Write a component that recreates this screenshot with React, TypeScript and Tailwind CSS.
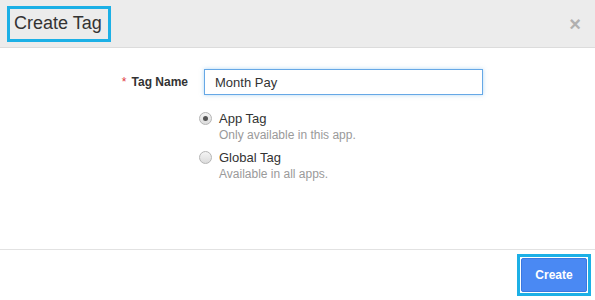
import React, { useState } from "react";

export default function App() {
  const [tagName, setTagName] = useState("Month Pay");
  const [scope, setScope] = useState<"app" | "global">("app");

  return (
    <div
      className="w-[595px] h-[300px] bg-white flex flex-col text-[#333]"
      style={{ fontFamily: '"Liberation Sans", Arial, sans-serif' }}
    >
      {/* Header */}
      <div className="h-[48px] bg-[#ececec] border-b border-[#dcdcdc] flex items-center justify-between pl-[7px] pr-[14px]">
        <div className="border-[3px] border-[#1cb0e6] pl-[4px] pr-[6px] h-[36px] flex items-center">
          <span className="text-[18px] text-[#333]">Create Tag</span>
        </div>
        <button type="button" className="text-[#b0b0b0] text-[20px] font-bold leading-none">
          ×
        </button>
      </div>

      {/* Body */}
      <div className="flex-1 pt-[21px]">
        <div className="flex items-center">
          <label className="w-[188px] text-right text-[12px] font-bold text-[#333]">
            <span className="text-[#e0383e] font-normal mr-[5px]">*</span>
            Tag Name
          </label>
          <input
            value={tagName}
            onChange={(e) => setTagName(e.target.value)}
            className="ml-[16px] w-[279px] h-[26px] border border-[#66a8e6] px-[10px] text-[13px] text-[#333] outline-none shadow-[0_0_4px_rgba(102,175,233,0.5)]"
          />
        </div>

        <div className="ml-[199px] mt-[16px] flex flex-col gap-[7px]">
          <RadioOption
            checked={scope === "app"}
            onSelect={() => setScope("app")}
            title="App Tag"
            desc="Only available in this app."
          />
          <RadioOption
            checked={scope === "global"}
            onSelect={() => setScope("global")}
            title="Global Tag"
            desc="Available in all apps."
          />
        </div>
      </div>

      {/* Footer */}
      <div className="h-[51px] border-t border-[#e2e2e2] flex items-center justify-end pr-[4px]">
        <div className="border-[3px] border-[#1cb0e6] p-[1px]">
          <button
            type="button"
            className="w-[66px] h-[34px] bg-[#4a89f3] border border-[#3b78e0] rounded-[2px] text-white text-[12px] font-bold"
          >
            Create
          </button>
        </div>
      </div>
    </div>
  );
}

function RadioOption({
  checked,
  onSelect,
  title,
  desc,
}: {
  checked: boolean;
  onSelect: () => void;
  title: string;
  desc: string;
}) {
  return (
    <div className="flex cursor-pointer" onClick={onSelect}>
      <div className="w-[13px] h-[13px] mt-[1px] rounded-full border border-[#b5b5b5] bg-gradient-to-b from-[#f4f4f4] to-[#dcdcdc] flex items-center justify-center">
        {checked && <div className="w-[5px] h-[5px] rounded-full bg-[#555]" />}
      </div>
      <div className="ml-[7px] flex flex-col">
        <span className="text-[13px] leading-[16px] text-[#333]">{title}</span>
        <span className="text-[12px] leading-[16px] text-[#9a9a9a]">{desc}</span>
      </div>
    </div>
  );
}
